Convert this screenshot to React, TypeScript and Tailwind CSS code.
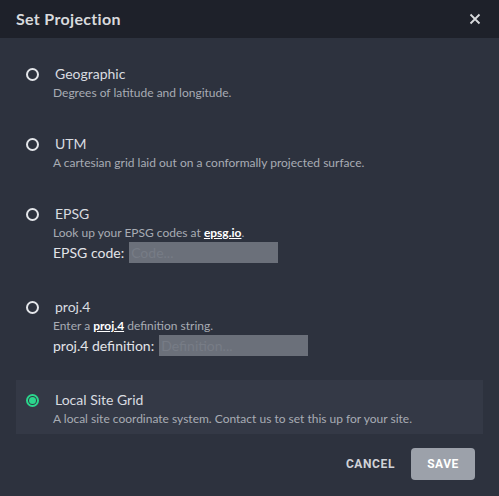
import { useState } from "react";

type Option = {
  id: string;
  label: string;
  description: React.ReactNode;
  field?: { label: string; placeholder: string };
};

const options: Option[] = [
  { id: "geographic", label: "Geographic", description: "Degrees of latitude and longitude." },
  { id: "utm", label: "UTM", description: "A cartesian grid laid out on a conformally projected surface." },
  {
    id: "epsg",
    label: "EPSG",
    description: (
      <>
        Look up your EPSG codes at{" "}
        <a className="font-bold text-white underline">epsg.io</a>.
      </>
    ),
    field: { label: "EPSG code:", placeholder: "Code..." },
  },
  {
    id: "proj4",
    label: "proj.4",
    description: (
      <>
        Enter a <a className="font-bold text-white underline">proj.4</a> definition string.
      </>
    ),
    field: { label: "proj.4 definition:", placeholder: "Definition..." },
  },
  {
    id: "local",
    label: "Local Site Grid",
    description: "A local site coordinate system. Contact us to set this up for your site.",
  },
];

function Radio({ checked }: { checked: boolean }) {
  return (
    <span
      className={`mt-[4px] flex h-[13px] w-[13px] shrink-0 items-center justify-center rounded-full border-2 ${
        checked ? "border-[#2bd68c]" : "border-[#e4e6ea]"
      }`}
    >
      {checked && <span className="h-[7px] w-[7px] rounded-full bg-[#2bd68c]" />}
    </span>
  );
}

export default function App() {
  const [selected, setSelected] = useState("local");

  return (
    <div
      className="flex h-[496px] w-[499px] flex-col bg-[#2d323e] text-[#d9dce0]"
      style={{ fontFamily: "Lato, 'Noto Sans', sans-serif" }}
    >
      <div className="flex h-[38px] shrink-0 items-center justify-between bg-[#1e212a] pl-4 pr-[18px]">
        <h1 className="text-[16px] font-bold tracking-[0.02em] text-[#d8dadd]">Set Projection</h1>
        <button type="button" className="text-[#d8dadd]">
          <svg width="12" height="12" viewBox="0 0 12 12" stroke="currentColor" strokeWidth="1.8">
            <path d="M1.5 1.5l9 9M10.5 1.5l-9 9" />
          </svg>
        </button>
      </div>

      <div className="flex flex-col gap-4 px-4 pt-4">
        {options.map((o) => {
          const checked = selected === o.id;
          return (
            <div
              key={o.id}
              onClick={() => setSelected(o.id)}
              className={`flex cursor-pointer gap-[16px] pl-[10px] pr-2 pt-[10px] ${
                checked ? "bg-[#343946]" : ""
              } ${o.field ? "pb-[8px]" : "pb-[6px]"}`}
            >
              <Radio checked={checked} />
              <div className="-ml-[2px] flex flex-col">
                <span className="ml-[2px] text-[14px] leading-5 text-[#d9dce0]">{o.label}</span>
                <span className="text-[12px] leading-[18px] text-[#a8acb4]">{o.description}</span>
                {o.field && (
                  <label className="flex items-center gap-[5px] text-[14px] leading-[21px] text-[#e2e4e8]">
                    {o.field.label}
                    <input
                      placeholder={o.field.placeholder}
                      className="h-[21px] w-[149px] bg-[#6b707a] px-[2px] text-[14px] text-[#e2e4e8] outline-none placeholder:text-[#777c86]"
                    />
                  </label>
                )}
              </div>
            </div>
          );
        })}
      </div>

      <div className="mt-auto flex items-center justify-end gap-4 px-6 pb-4">
        <button
          type="button"
          className="text-[12px] font-bold tracking-[0.05em] text-[#d0d3d8]"
          style={{ fontFamily: "Roboto, 'Liberation Sans', sans-serif" }}
        >
          CANCEL
        </button>
        <button
          type="button"
          className="h-[32px] w-[64px] rounded-[4px] bg-[#9ca1aa] text-[12px] font-bold tracking-[0.04em] text-white"
          style={{ fontFamily: "Roboto, 'Liberation Sans', sans-serif" }}
        >
          SAVE
        </button>
      </div>
    </div>
  );
}
